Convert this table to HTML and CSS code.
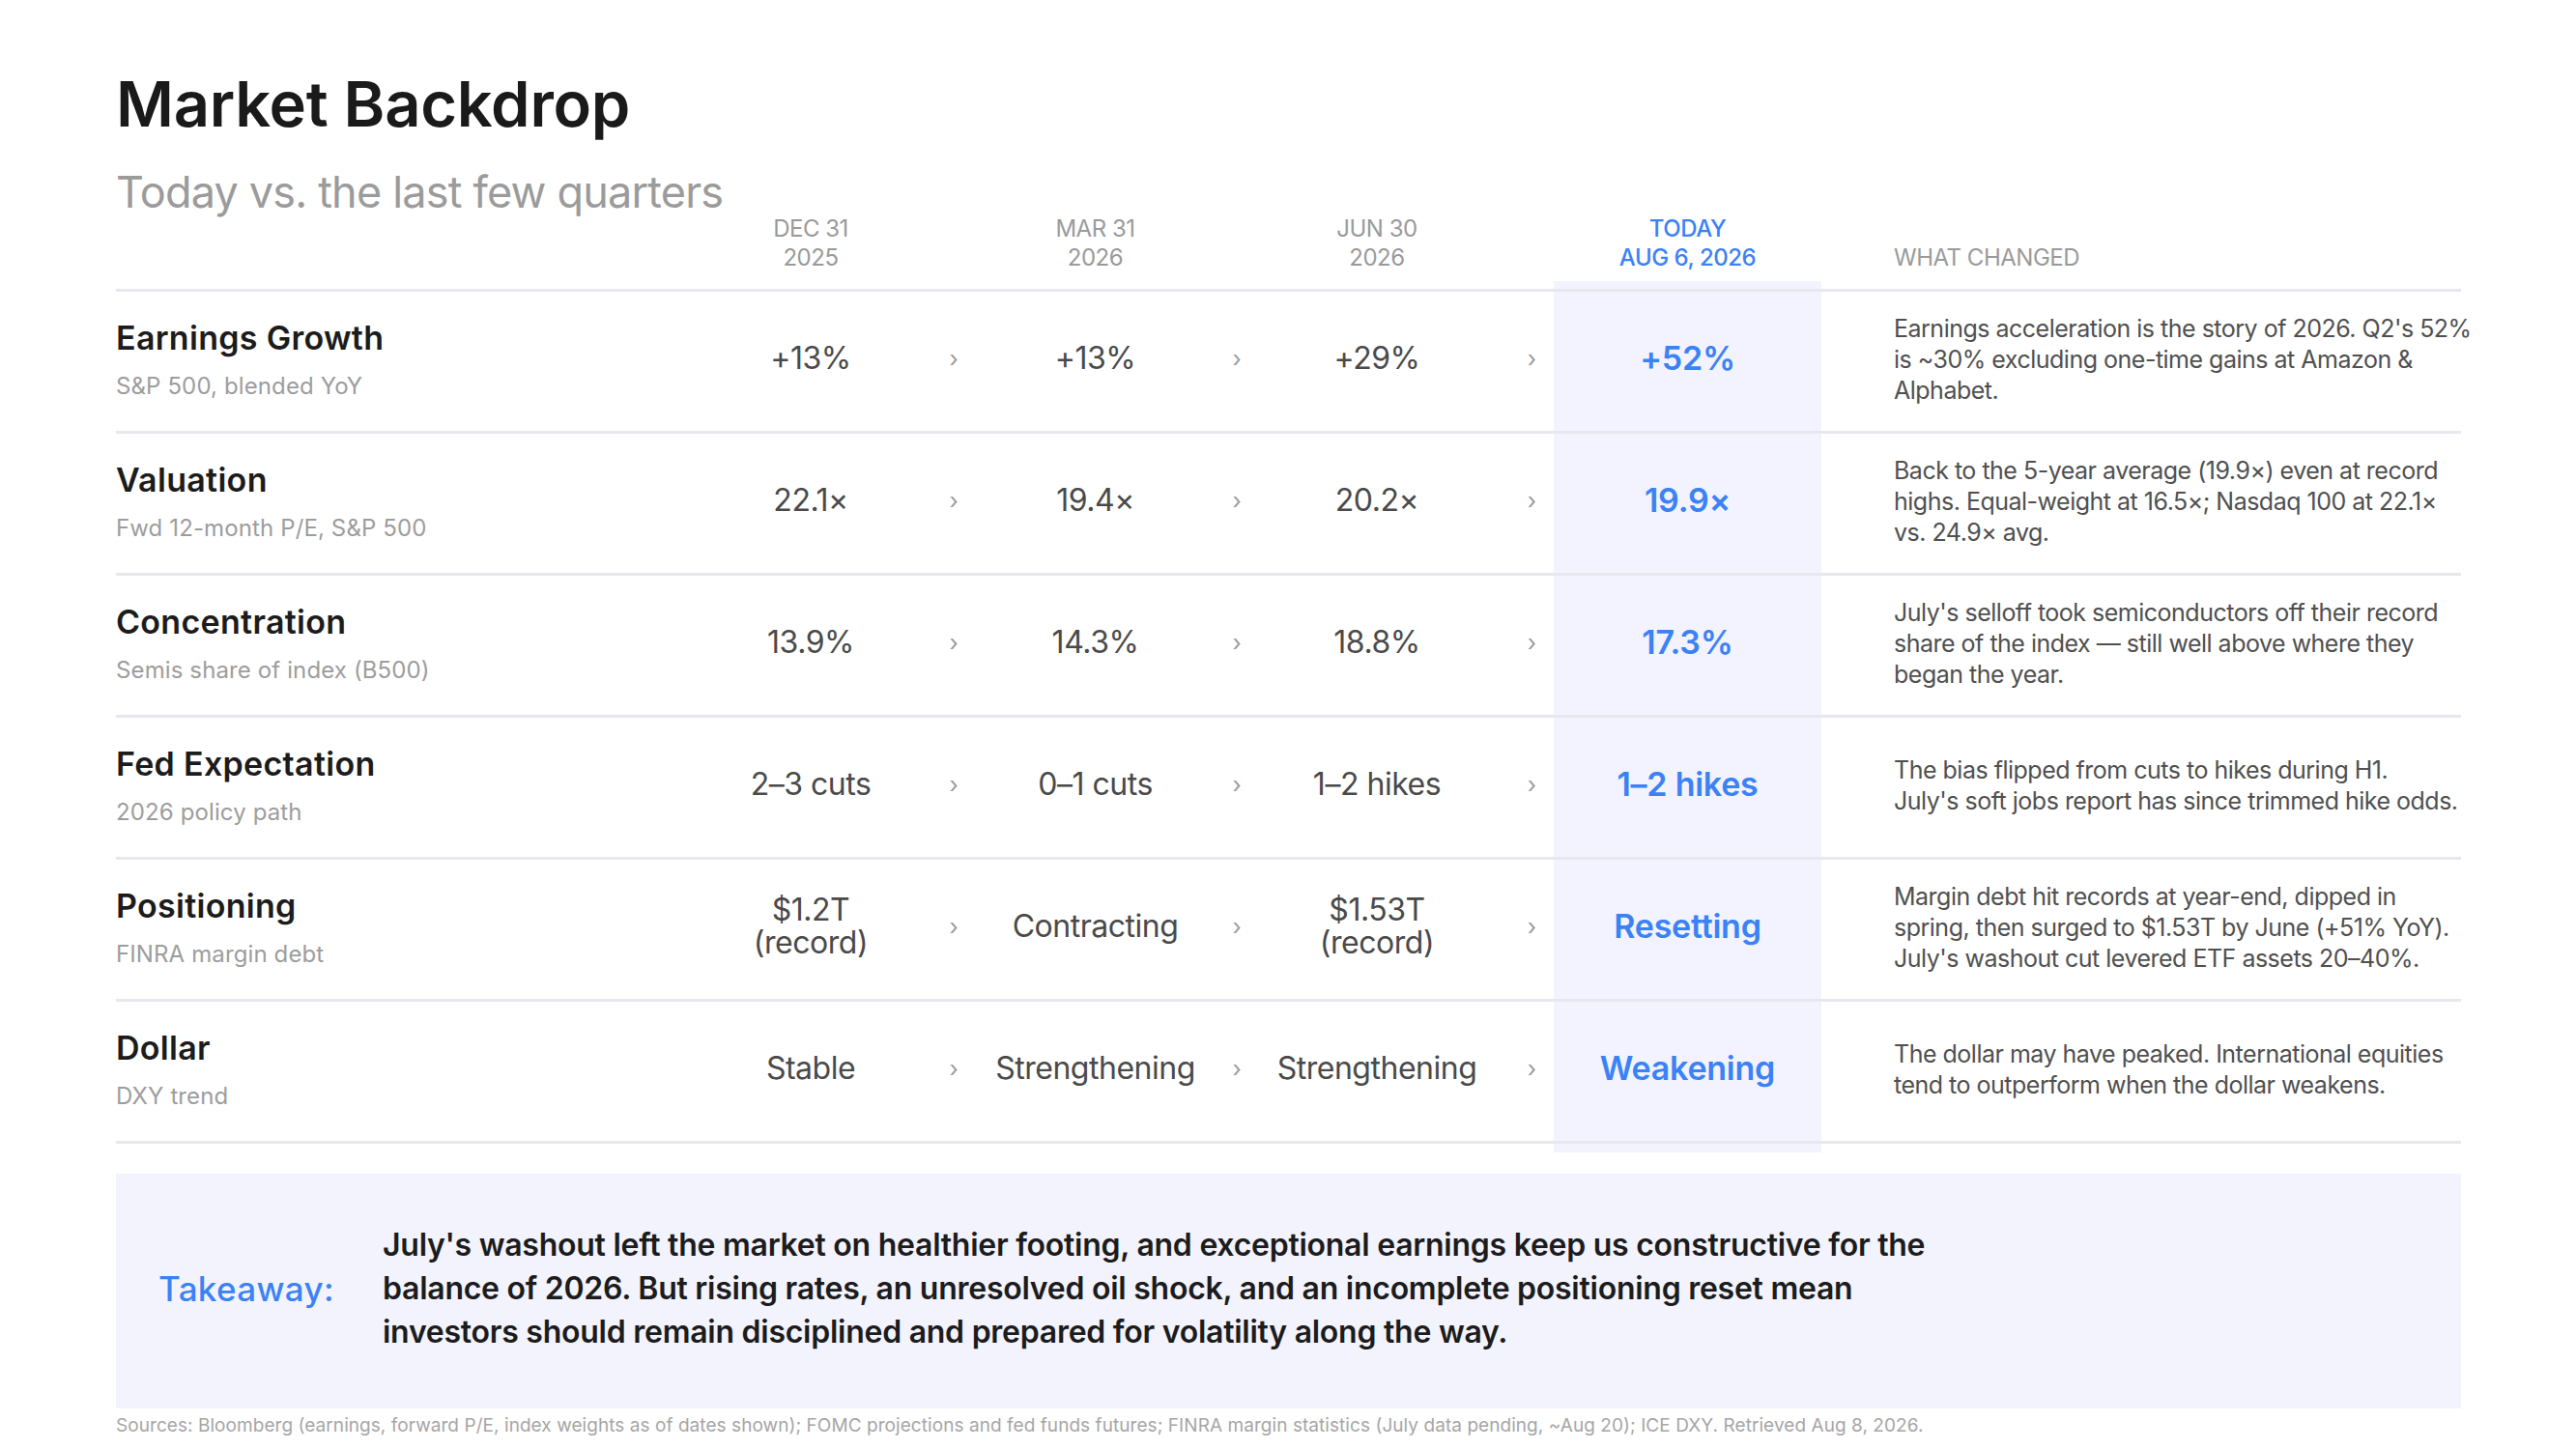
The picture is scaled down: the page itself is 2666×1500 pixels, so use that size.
FILE: index.html
```html
<!DOCTYPE html>
<html lang="en">
<head>
<meta charset="utf-8">
<title>Market Backdrop</title>
<link rel="stylesheet" href="styles.css">
</head>
<body>
<div class="page">
  <h1 class="title">Market Backdrop</h1>
  <p class="subtitle">Today vs. the last few quarters</p>

  <div class="table">
    <div class="band"></div>

    <div class="grid head">
      <div></div>
      <div class="col">DEC 31<br>2025</div>
      <div></div>
      <div class="col">MAR 31<br>2026</div>
      <div></div>
      <div class="col">JUN 30<br>2026</div>
      <div></div>
      <div class="col today-h">TODAY<br>AUG 6, 2026</div>
      <div class="what-h">WHAT CHANGED</div>
    </div>

    <div class="grid row">
      <div class="lab"><div class="name">Earnings Growth</div><div class="sub">S&amp;P 500, blended YoY</div></div>
      <div class="val">+13%</div>
      <div class="chev">›</div>
      <div class="val">+13%</div>
      <div class="chev">›</div>
      <div class="val">+29%</div>
      <div class="chev last">›</div>
      <div class="val today">+52%</div>
      <div class="what">Earnings acceleration is the story of 2026. Q2's 52%<br>is ~30% excluding one-time gains at Amazon &amp;<br>Alphabet.</div>
    </div>

    <div class="grid row">
      <div class="lab"><div class="name">Valuation</div><div class="sub">Fwd 12-month P/E, S&amp;P 500</div></div>
      <div class="val">22.1×</div>
      <div class="chev">›</div>
      <div class="val">19.4×</div>
      <div class="chev">›</div>
      <div class="val">20.2×</div>
      <div class="chev last">›</div>
      <div class="val today">19.9×</div>
      <div class="what">Back to the 5-year average (19.9×) even at record<br>highs. Equal-weight at 16.5×; Nasdaq 100 at 22.1×<br>vs. 24.9× avg.</div>
    </div>

    <div class="grid row">
      <div class="lab"><div class="name">Concentration</div><div class="sub">Semis share of index (B500)</div></div>
      <div class="val">13.9%</div>
      <div class="chev">›</div>
      <div class="val">14.3%</div>
      <div class="chev">›</div>
      <div class="val">18.8%</div>
      <div class="chev last">›</div>
      <div class="val today">17.3%</div>
      <div class="what">July's selloff took semiconductors off their record<br>share of the index — still well above where they<br>began the year.</div>
    </div>

    <div class="grid row">
      <div class="lab"><div class="name">Fed Expectation</div><div class="sub">2026 policy path</div></div>
      <div class="val">2–3 cuts</div>
      <div class="chev">›</div>
      <div class="val">0–1 cuts</div>
      <div class="chev">›</div>
      <div class="val">1–2 hikes</div>
      <div class="chev last">›</div>
      <div class="val today">1–2 hikes</div>
      <div class="what">The bias flipped from cuts to hikes during H1.<br>July's soft jobs report has since trimmed hike odds.</div>
    </div>

    <div class="grid row">
      <div class="lab"><div class="name">Positioning</div><div class="sub">FINRA margin debt</div></div>
      <div class="val">$1.2T<br>(record)</div>
      <div class="chev">›</div>
      <div class="val">Contracting</div>
      <div class="chev">›</div>
      <div class="val">$1.53T<br>(record)</div>
      <div class="chev last">›</div>
      <div class="val today">Resetting</div>
      <div class="what">Margin debt hit records at year-end, dipped in<br>spring, then surged to $1.53T by June (+51% YoY).<br>July's washout cut levered ETF assets 20–40%.</div>
    </div>

    <div class="grid row">
      <div class="lab"><div class="name">Dollar</div><div class="sub">DXY trend</div></div>
      <div class="val">Stable</div>
      <div class="chev">›</div>
      <div class="val">Strengthening</div>
      <div class="chev">›</div>
      <div class="val">Strengthening</div>
      <div class="chev last">›</div>
      <div class="val today">Weakening</div>
      <div class="what">The dollar may have peaked. International equities<br>tend to outperform when the dollar weakens.</div>
    </div>
  </div>

  <div class="takeaway">
    <div class="tk-label">Takeaway:</div>
    <div class="tk-text">July's washout left the market on healthier footing, and exceptional earnings keep us constructive for the<br>balance of 2026. But rising rates, an unresolved oil shock, and an incomplete positioning reset mean<br>investors should remain disciplined and prepared for volatility along the way.</div>
  </div>

  <p class="sources">Sources: Bloomberg (earnings, forward P/E, index weights as of dates shown); FOMC projections and fed funds futures; FINRA margin statistics (July data pending, ~Aug 20); ICE DXY. Retrieved Aug 8, 2026.</p>
</div>
</body>
</html>
```

FILE: styles.css
```css
* { box-sizing: border-box; }

html, body {
  margin: 0;
  padding: 0;
  background: #ffffff;
}

body {
  font-family: Inter, "Noto Sans", sans-serif;
  color: #1c1c1c;
  width: 2666px;
  height: 1500px;
  overflow: hidden;
}

.page {
  padding: 69px 119px 0 120px;
}

.title {
  margin: 0;
  font-size: 65px;
  line-height: 78px;
  font-weight: 600;
  letter-spacing: -0.004em;
  color: #1a1a1a;
}

.subtitle {
  margin: 27px 0 0;
  font-size: 45px;
  line-height: 50px;
  font-weight: 400;
  letter-spacing: -0.018em;
  color: #9b9b9b;
}

.table {
  position: relative;
  margin-top: -2px;
}

.band {
  position: absolute;
  left: 1488px;
  width: 277px;
  top: 69px;
  bottom: -9px;
  background: #f2f3fe;
}

.grid {
  position: relative;
  display: grid;
  grid-template-columns: 586px 266px 30px 263px 30px 260px 53px 277px 662px;
}

.head {
  padding-bottom: 17px;
  border-bottom: 3px solid #e7e7ee;
  align-items: end;
  font-size: 24px;
  line-height: 30px;
  letter-spacing: -0.02em;
  color: #9a9a9a;
}

.head .col {
  text-align: center;
}

.head .today-h {
  color: #3b82f6;
  font-weight: 500;
}

.head .what-h {
  padding-left: 75px;
}

.row {
  height: 147px;
  padding-bottom: 5px;
  border-bottom: 3px solid #e7e7ee;
  align-items: center;
}

.lab .name {
  font-size: 34px;
  line-height: 42px;
  font-weight: 600;
  letter-spacing: 0.009em;
  color: #1c1c1c;
}

.lab .sub {
  margin-top: 14px;
  font-size: 24px;
  line-height: 30px;
  letter-spacing: 0.005em;
  color: #9d9d9d;
}

.val {
  margin-bottom: 2px;
  text-align: center;
  font-size: 32px;
  line-height: 34px;
  letter-spacing: -0.015em;
  color: #4a4a4a;
}

.val.today {
  font-size: 34px;
  font-weight: 600;
  letter-spacing: -0.007em;
  color: #3b82f6;
}

.chev {
  text-align: center;
  font-size: 24px;
  line-height: 30px;
  color: #9a9a9a;
}

.chev.last {
  text-align: right;
  padding-right: 18px;
}

.what {
  padding-left: 75px;
  font-size: 25px;
  line-height: 32px;
  letter-spacing: -0.02em;
  color: #505050;
  white-space: nowrap;
}

.takeaway {
  margin-top: 31px;
  height: 243px;
  display: flex;
  align-items: center;
  padding: 0 0 6px 44px;
  background: #f3f3fe;
}

.tk-label {
  flex: 0 0 232px;
  font-size: 35px;
  font-weight: 500;
  letter-spacing: 0.01em;
  color: #3b82f6;
}

.tk-text {
  font-size: 32px;
  line-height: 45px;
  font-weight: 600;
  letter-spacing: -0.008em;
  color: #1c1c1c;
  white-space: nowrap;
}

.sources {
  margin: 6px 0 0;
  font-size: 19px;
  line-height: 24px;
  letter-spacing: 0.003em;
  color: #a6a6a6;
  white-space: nowrap;
}
```
